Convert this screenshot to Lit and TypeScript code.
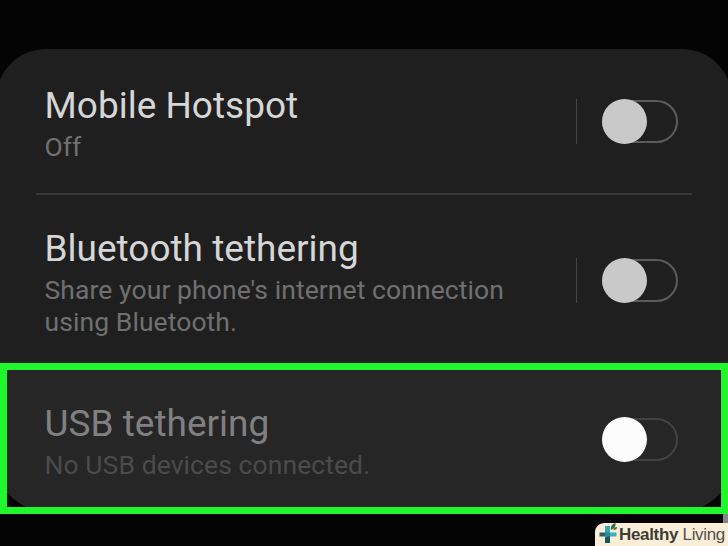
import { LitElement, html, css } from 'lit';
import { customElement, property } from 'lit/decorators.js';

@customElement('toggle-switch')
export class ToggleSwitch extends LitElement {
  static styles = css`
    :host {
      display: block;
      flex: none;
    }
    .track {
      box-sizing: border-box;
      display: flex;
      align-items: center;
      width: 76px;
      height: 43px;
      border: 2px solid var(--track-color, #5c5c5c);
      border-radius: 22px;
    }
    .thumb {
      flex: none;
      width: 45px;
      height: 45px;
      margin-left: -2px;
      border-radius: 50%;
      background: var(--thumb-color, #c9c9c9);
    }
  `;

  render() {
    return html`<div class="track"><div class="thumb"></div></div>`;
  }
}

@customElement('setting-row')
export class SettingRow extends LitElement {
  @property() heading = '';
  @property({ type: Array }) lines: string[] = [];

  static styles = css`
    :host {
      display: flex;
      box-sizing: border-box;
      justify-content: space-between;
      font-family: Roboto, sans-serif;
    }
    .title {
      padding-bottom: 3px;
      font-size: 37px;
      line-height: 44px;
      color: var(--title-color, #d6d6d6);
      white-space: nowrap;
    }
    .summary {
      font-size: 26.5px;
      line-height: 32px;
      letter-spacing: 0.08px;
      color: var(--summary-color, #707070);
      white-space: nowrap;
    }
    .control {
      display: flex;
      align-items: center;
      align-self: flex-start;
      height: 45px;
      padding-top: var(--control-top, 0);
    }
    .separator {
      width: 1px;
      height: 45px;
      margin-right: 25px;
      background: var(--separator-color, #454545);
    }
  `;

  render() {
    return html`
      <div>
        <div class="title">${this.heading}</div>
        ${this.lines.map((line) => html`<div class="summary">${line}</div>`)}
      </div>
      <div class="control">
        <div class="separator"></div>
        <toggle-switch></toggle-switch>
      </div>
    `;
  }
}

@customElement('brand-badge')
export class BrandBadge extends LitElement {
  static styles = css`
    :host {
      display: flex;
      align-items: center;
      box-sizing: border-box;
      width: 133px;
      height: 23px;
      padding-left: 4px;
      border-radius: 9px 0 0 0;
      background: #fbeed8;
      font-family: 'Liberation Sans', Arial, sans-serif;
      font-size: 17px;
      line-height: 22px;
      white-space: nowrap;
      color: #55504a;
    }
    .logo {
      flex: none;
      width: 20px;
      height: 23px;
      overflow: visible;
    }
    .name {
      letter-spacing: -0.33px;
    }
    b {
      color: #403c38;
    }
  `;

  render() {
    return html`
      <svg class="logo" viewBox="0 0 20 23">
        <path d="M6 3h5v6H6z" fill="#35a9b4" />
        <path d="M10 9.500h7.500v4H10z" fill="#35b5bf" />
        <path d="M0.500 9.500h6v4h-6z" fill="#24616e" />
        <path d="M6 9h5v10.500H6z" fill="#2b8d9a" />
        <path d="M6 15l5-2v7H6z" fill="#1d5360" />
        <path d="M12 7Q11 1.500 16.500 0Q17.500 5 12 7z" fill="#3a6b35" />
        <path d="M14.500 7Q15 4 18 4Q18 7 14.500 7z" fill="#3a6b35" />
      </svg>
      <span class="name"><b>Healthy</b> Living</span>
    `;
  }
}

@customElement('app-root')
export class AppRoot extends LitElement {
  static styles = css`
    :host {
      display: flex;
      flex-direction: column;
      box-sizing: border-box;
      width: 728px;
      height: 546px;
      padding-top: 49px;
      overflow: hidden;
      background: #040404;
    }
    .card {
      flex: none;
      box-sizing: border-box;
      height: 314px;
      margin: 0 -4px;
      padding: 0 4px;
      border-radius: 50px 50px 0 0;
      background: #1f1f1f;
    }
    .hotspot {
      height: 144px;
      padding: 35px 50px 0 44.5px;
      --control-top: 15px;
    }
    .divider {
      height: 2px;
      margin: 0 36px;
      background: #383838;
    }
    .bluetooth {
      padding: 32px 50px 0 44.5px;
      --control-top: 31px;
    }
    .highlight {
      flex: none;
      box-sizing: border-box;
      height: 151px;
      border: 7px solid #20f72c;
      overflow: hidden;
      background: #040404;
    }
    .card-end {
      height: 141px;
      margin: 0 -11px;
      border-radius: 0 0 50px 50px;
      background: #262626;
    }
    .usb {
      padding: 32px 54px 0 48.5px;
      --control-top: 15px;
      --title-color: #808080;
      --summary-color: #4b4b4b;
      --track-color: #424242;
      --thumb-color: #fcfcfc;
      --separator-color: transparent;
    }
    .footer {
      flex: 1;
      display: flex;
      flex-direction: column;
      align-items: flex-end;
    }
    .edge {
      width: 5px;
      height: 9px;
      background: #858585;
    }
  `;

  render() {
    return html`
      <div class="card">
        <setting-row class="hotspot" heading="Mobile Hotspot" .lines=${['Off']}></setting-row>
        <div class="divider"></div>
        <setting-row
          class="bluetooth"
          heading="Bluetooth tethering"
          .lines=${["Share your phone's internet connection", 'using Bluetooth.']}
        ></setting-row>
      </div>
      <div class="highlight">
        <div class="card-end">
          <setting-row class="usb" heading="USB tethering" .lines=${['No USB devices connected.']}></setting-row>
        </div>
      </div>
      <div class="footer">
        <div class="edge"></div>
        <brand-badge></brand-badge>
      </div>
    `;
  }
}
